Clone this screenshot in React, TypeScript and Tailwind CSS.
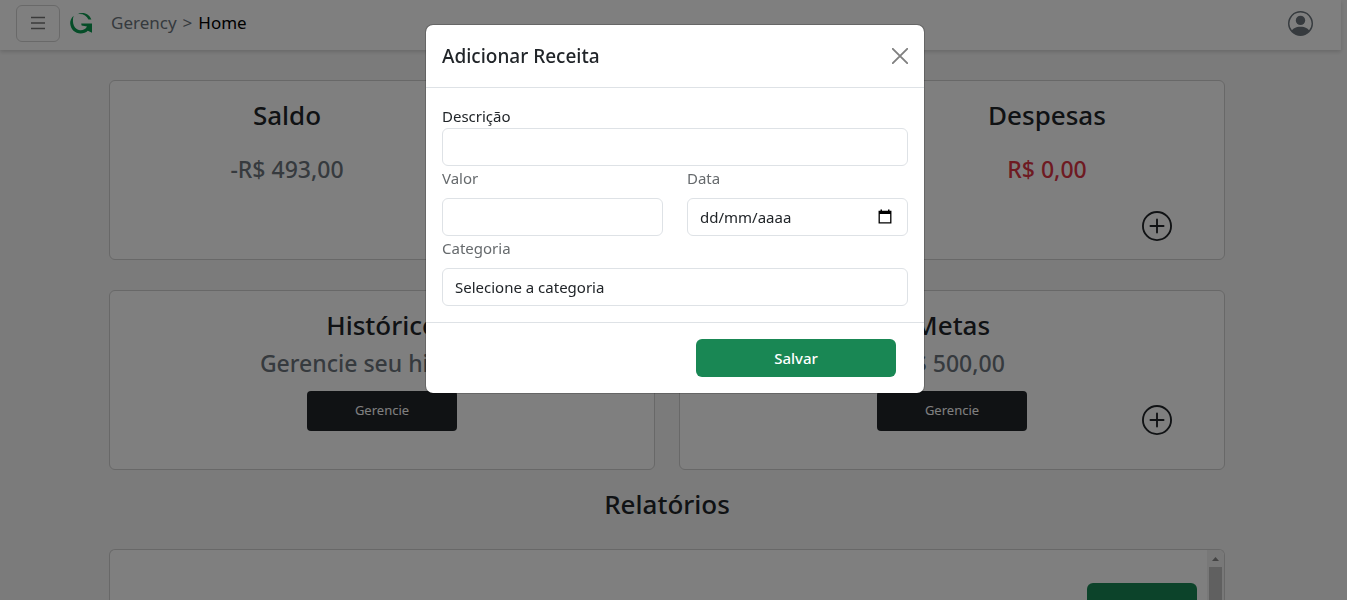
import React from "react";
import { BsPersonCircle, BsPlusCircle } from "react-icons/bs";

function Logo() {
  return (
    <svg viewBox="0 0 24 24" className="size-6" aria-hidden="true">
      <path d="M8 3.4C13.5 0.2 20.4 2.4 22.4 8.6H19.4C17.6 4.2 13 2.2 8 3.4Z" fill="#0e9a50" />
      <path
        d="M4.6 4.8C2.2 7 1 9.8 1.2 12.6C1.6 18.4 6 22.6 11.6 22.6C14.6 22.6 17 21.6 18.8 19.8L23 21.8V12.4H12.2L12.6 14.4L18 15.4C16.6 18 14 19.4 11 19.2C5.6 18.8 2.4 12.4 4.6 4.8Z"
        fill="#0a9a50"
      />
    </svg>
  );
}

function Card({ title, children }: { title: string; children?: React.ReactNode }) {
  return (
    <section className="flex h-[180px] flex-col items-center rounded-[6px] border border-[#d0d0d0] bg-white pt-4">
      <h2 className="text-[26px] leading-9 font-medium text-[#212529]">{title}</h2>
      {children}
    </section>
  );
}

function AddButton({ label }: { label: string }) {
  return (
    <button type="button" aria-label={label} className="mr-[52px] self-end text-[#212529]">
      <BsPlusCircle size={30} />
    </button>
  );
}

const manageButton = "h-10 w-[150px] rounded-[4px] bg-[#212529] text-[13px] text-white";
const field =
  "h-[38px] w-full rounded-[6px] border border-[#dee2e6] bg-white px-3 text-[15px] text-[#212529] placeholder:text-[#212529]";

function Dashboard() {
  return (
    <div className="flex h-screen flex-col overflow-hidden bg-[#f7f7f7]">
      <header className="mr-[6px] flex h-[50px] shrink-0 items-center bg-white pr-7 pb-1 pl-4 shadow-[0_2px_4px_rgba(0,0,0,0.15)]">
        <button
          type="button"
          aria-label="Menu"
          className="flex h-[37px] w-11 items-center justify-center rounded-[6px] border border-[#d3d3d3]"
        >
          <svg viewBox="0 0 16 14" className="h-[14px] w-4" aria-hidden="true">
            <path d="M1 1.5H15M1 7H15M1 12.5H15" stroke="#747474" strokeWidth="1.6" />
          </svg>
        </button>
        <a href="#home" aria-label="Gerency" className="ml-[9px]">
          <Logo />
        </a>
        <nav className="ml-[18px] flex gap-[6px] text-[17px] leading-6 text-[#6c757d]">
          <a href="#gerency">Gerency</a>
          <span>&gt;</span>
          <a href="#home" className="text-black">Home</a>
        </nav>
        <button type="button" aria-label="Conta" className="ml-auto text-[#6c757d]">
          <BsPersonCircle size={25} />
        </button>
      </header>

      <div className="flex min-h-0 flex-1 flex-col pr-[13px]">
        <main className="mx-auto flex min-h-0 w-full max-w-[1140px] flex-1 flex-col px-3 pt-[30px]">
          <div className="grid grid-cols-3 gap-6">
            <Card title="Saldo">
              <p className="mt-[18px] text-[23px] leading-9 font-medium text-[#6c757d]">-R$ 493,00</p>
            </Card>
            <Card title="Receitas" />
            <Card title="Despesas">
              <p className="mt-[18px] mb-6 text-[23px] leading-9 font-medium text-[#dc3545]">R$ 0,00</p>
              <AddButton label="Adicionar despesa" />
            </Card>
          </div>
          <div className="mt-[30px] grid grid-cols-2 gap-6">
            <Card title="Histórico">
              <p className="mt-1 mb-3 text-[23px] leading-8 font-medium text-[#6c757d]">Gerencie seu histórico</p>
              <button type="button" className={manageButton}>Gerencie</button>
            </Card>
            <Card title="Metas">
              <p className="mt-1 mb-3 text-[23px] leading-8 font-medium text-[#6c757d]">R$ 500,00</p>
              <div className="grid w-full grid-cols-[1fr_auto_1fr] items-start">
                <button type="button" className={manageButton + " col-start-2"}>Gerencie</button>
                <div className="flex justify-end pt-[14px]">
                  <AddButton label="Adicionar meta" />
                </div>
              </div>
            </Card>
          </div>
          <h2 className="mt-4 text-center text-[26px] leading-9 font-medium text-[#212529]">Relatórios</h2>
          <section className="mt-[27px] flex min-h-0 flex-1 justify-end overflow-hidden rounded-t-[6px] border border-b-0 border-[#d0d0d0] bg-white">
            <div className="mt-[33px] mr-[10px] h-10 w-[110px] rounded-[6px] bg-[#198754]" />
            <div className="flex w-[17px] flex-col items-center bg-[#f1f1f1]">
              <svg viewBox="0 0 7 4" className="mt-[7px] mb-[6px] h-1 w-[7px] shrink-0" aria-hidden="true">
                <path d="M0 4L3.5 0L7 4Z" fill="#888" />
              </svg>
              <div className="w-[13px] flex-1 bg-[#c1c1c1]" />
            </div>
          </section>
        </main>
      </div>
    </div>
  );
}

function AddIncomeDialog() {
  return (
    <div className="fixed inset-0 flex items-start justify-center bg-black/50 pt-6 pl-[3px]">
      <form
        role="dialog"
        aria-modal="true"
        aria-labelledby="dialog-title"
        className="w-full max-w-[500px] rounded-[8px] border border-black/20 bg-white bg-clip-padding text-[15px] leading-6 text-[#212529]"
      >
        <header className="flex h-[63px] items-center justify-between border-b border-[#dee2e6] px-4">
          <h1 id="dialog-title" className="text-[19px] font-medium">Adicionar Receita</h1>
          <button type="button" aria-label="Fechar" className="text-[#808080]">
            <svg viewBox="0 0 16 16" className="size-4" aria-hidden="true">
              <path d="M0.8 0.8L15.2 15.2M15.2 0.8L0.8 15.2" stroke="currentColor" strokeWidth="1.9" strokeLinecap="round" />
            </svg>
          </button>
        </header>
        <div className="p-4">
          <label htmlFor="descricao" className="block">Descrição</label>
          <input id="descricao" type="text" className={field} />
          <div className="grid grid-cols-2 gap-6">
            <div>
              <label htmlFor="valor" className="mb-2 block text-[#666a6d]">Valor</label>
              <input id="valor" type="text" className={field} />
            </div>
            <div>
              <label htmlFor="data" className="mb-2 block text-[#666a6d]">Data</label>
              <div className="relative">
                <input id="data" type="text" placeholder="dd/mm/aaaa" className={field} />
                <svg viewBox="0 0 14 15" className="absolute top-[11px] right-4 h-[15px] w-[14px]" aria-hidden="true">
                  <path d="M1.2 2.5H12.8V13.8H1.2Z" fill="none" stroke="#000" strokeWidth="1.3" />
                  <path d="M1 2H13V5H1ZM2.5 0.5H4V2.5H2.5ZM10 0.5H11.5V2.5H10Z" fill="#000" />
                </svg>
              </div>
            </div>
          </div>
          <label htmlFor="categoria" className="mb-2 block text-[#666a6d]">Categoria</label>
          <select id="categoria" className={field + " appearance-none"}>
            <option>Selecione a categoria</option>
          </select>
        </div>
        <footer className="flex justify-end border-t border-[#dee2e6] py-4 pr-7">
          <button type="submit" className="h-[38px] w-[200px] rounded-[6px] bg-[#198754] font-medium text-white">Salvar</button>
        </footer>
      </form>
    </div>
  );
}

export default function App() {
  return (
    <div className="font-['Noto_Sans',sans-serif]">
      <Dashboard />
      <AddIncomeDialog />
    </div>
  );
}
